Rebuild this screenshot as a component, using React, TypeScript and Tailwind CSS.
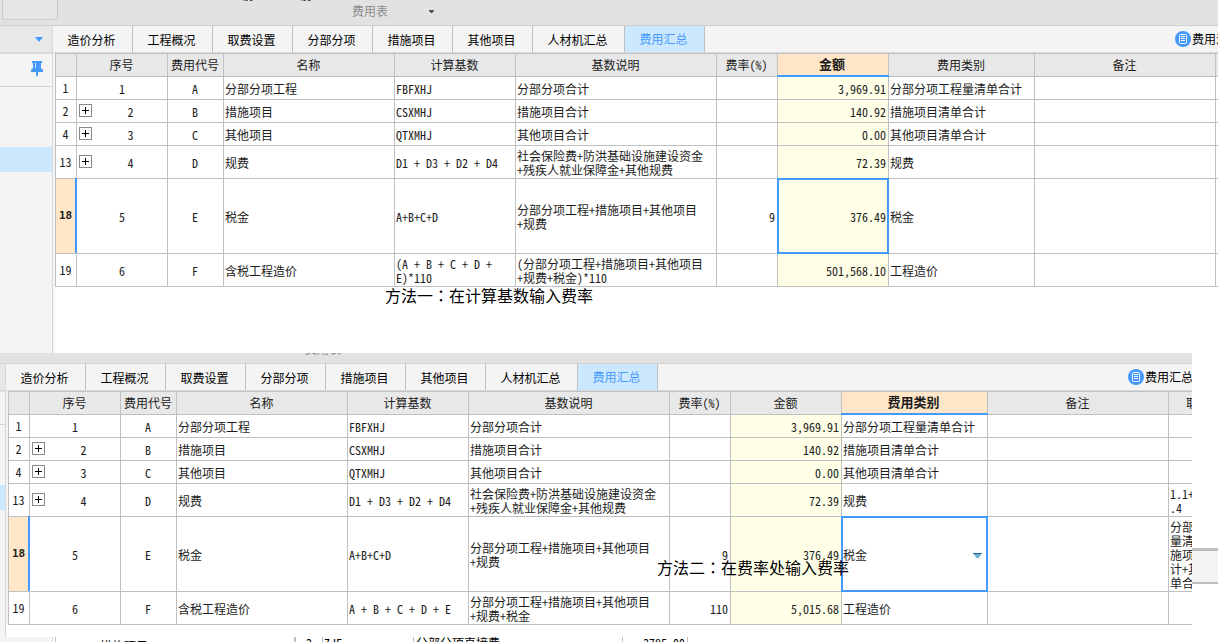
import { Fragment, type ReactNode } from "react";

type Row = {
  line: number;
  no: string;
  expandable?: boolean;
  code: string;
  name: string;
  base: string[];
  desc: string[];
  rate?: string;
  amount: string;
  kind: string;
  extra?: string[];
  height: string;
};

const TABS = ["造价分析", "工程概况", "取费设置", "分部分项", "措施项目", "其他项目", "人材机汇总", "费用汇总"];

const COLUMNS = ["", "序号", "费用代号", "名称", "计算基数", "基数说明", "费率(%)", "金额", "费用类别", "备注"];

const COMMON: Row[] = [
  { line: 1, no: "1", code: "A", name: "分部分项工程", base: ["FBFXHJ"], desc: ["分部分项合计"], amount: "3,969.91", kind: "分部分项工程量清单合计", height: "h-[23px]" },
  { line: 2, no: "2", expandable: true, code: "B", name: "措施项目", base: ["CSXMHJ"], desc: ["措施项目合计"], amount: "140.92", kind: "措施项目清单合计", height: "h-[23px]" },
  { line: 4, no: "3", expandable: true, code: "C", name: "其他项目", base: ["QTXMHJ"], desc: ["其他项目合计"], amount: "0.00", kind: "其他项目清单合计", height: "h-[23px]" },
  { line: 13, no: "4", expandable: true, code: "D", name: "规费", base: ["D1 + D3 + D2 + D4"], desc: ["社会保险费+防洪基础设施建设资金", "+残疾人就业保障金+其他规费"], amount: "72.39", kind: "规费", extra: ["1.1+", ".4"], height: "h-[33px]" },
  { line: 18, no: "5", code: "E", name: "税金", base: ["A+B+C+D"], desc: ["分部分项工程+措施项目+其他项目", "+规费"], rate: "9", amount: "376.49", kind: "税金", extra: ["分部分项", "量清单合", "施项目合", "计+其他", "单合计"], height: "h-[75px]" },
];

const METHOD_ONE: Row[] = [
  ...COMMON.map((row) => ({ ...row, extra: undefined })),
  { line: 19, no: "6", code: "F", name: "含税工程造价", base: ["(A + B + C + D +", "E)*110"], desc: ["(分部分项工程+措施项目+其他项目", "+规费+税金)*110"], amount: "501,568.10", kind: "工程造价", height: "h-[33px]" },
];

const METHOD_TWO: Row[] = [
  ...COMMON,
  { line: 19, no: "6", code: "F", name: "含税工程造价", base: ["A + B + C + D + E"], desc: ["分部分项工程+措施项目+其他项目", "+规费+税金"], rate: "110", amount: "5,015.68", kind: "工程造价", height: "h-[33px]" },
];

const BORDER = "border-r border-b border-[#c0c0c0] last:border-r-0";
const CELL = `${BORDER} overflow-hidden p-0 pr-[2px] pl-px leading-[14px] font-normal whitespace-nowrap`;

function Lines({ items }: { items: string[] }) {
  return (
    <>
      {items.map((item, i) => (
        <Fragment key={i}>
          {i > 0 && <br />}
          {item}
        </Fragment>
      ))}
    </>
  );
}

function Tabs({ end }: { end: ReactNode }) {
  return (
    <div className="flex h-[27px] border-b border-[#dadada] bg-[#f4f4f4] font-['Noto_Sans_CJK_SC',sans-serif]">
      <div role="tablist" className="flex">
        {TABS.map((tab, i) => {
          const active = i === TABS.length - 1;
          return (
            <button
              key={tab}
              role="tab"
              aria-selected={active}
              className={
                "h-[26px] border-r border-[#c0c0c0] pr-[16px] pl-[14px] text-center text-[12px] whitespace-nowrap " +
                (i === 6 ? "w-[92px] " : "w-[80px] ") +
                (active ? "bg-[#cce8ff] leading-[26px] text-[#4499ff]" : "leading-[28px] text-black")
              }
            >
              {tab}
            </button>
          );
        })}
      </div>
      {end}
    </div>
  );
}

function SummaryButton() {
  return (
    <button className="flex h-[26px] items-center gap-px text-[12px] whitespace-nowrap text-black">
      <svg viewBox="0 0 16 16" className="size-4 shrink-0" aria-hidden="true">
        <circle cx="8" cy="8" r="8" fill="#4499ff" />
        <rect x="4.5" y="3.5" width="7" height="9" rx="1" fill="none" stroke="#fff" />
        <path d="M6 5.500h4M6 7.500h4M6 9.500h4" stroke="#fff" strokeWidth="1" />
      </svg>
      <span className="leading-[28px]">费用汇总</span>
    </button>
  );
}

function CostTable({ rows, active, extraTitle }: { rows: Row[]; active: "金额" | "费用类别"; extraTitle: string }) {
  const frame = <span className="pointer-events-none absolute -inset-px border-2 border-[#4499ff]" />;
  return (
    <table className="w-full table-fixed border-separate border-spacing-0 border-t border-l border-[#c0c0c0] bg-white text-[12px] text-[#1c1c1c]">
      <colgroup>
        <col className="w-[21px]" />
        <col className="w-[91px]" />
        <col className="w-[56px]" />
        <col className="w-[171px]" />
        <col className="w-[121px]" />
        <col className="w-[201px]" />
        <col className="w-[61px]" />
        <col className="w-[111px]" />
        <col className="w-[146px]" />
        <col className="w-[181px]" />
        <col />
      </colgroup>
      <thead>
        <tr className="h-[23px]">
          {COLUMNS.map((title) =>
            title === active ? (
              <th key={title} className={`${BORDER} relative bg-[#ffe6c8] p-0 pr-[2px] pb-[2px] text-[13px] leading-[14px] font-bold`}>
                {title}
                <span className="absolute -right-px -bottom-px -left-px h-[2px] bg-[#4499ff]" />
              </th>
            ) : (
              <th key={title} className={`${CELL} bg-[#e8e8e8] text-center`}>
                {title}
              </th>
            ),
          )}
          <th className={`${BORDER} overflow-hidden bg-[#e8e8e8] p-0 pl-[17px] text-left leading-[14px] font-normal whitespace-nowrap`}>{extraTitle}</th>
        </tr>
      </thead>
      <tbody>
        {rows.map((row) => {
          const current = row.line === 18;
          return (
            <tr key={row.line} className={row.height}>
              {current ? (
                <th className={`${BORDER} relative bg-[#ffe6c8] p-0 pr-px font-['DejaVu_Sans_Mono',monospace] text-[11px] leading-[14px] font-bold`}>
                  {row.line}
                  <span className="absolute -top-px -right-px bottom-0 w-[2px] bg-[#4499ff]" />
                </th>
              ) : (
                <th className={`${CELL} text-center`}>{row.line}</th>
              )}
              <td className={`${CELL} pb-px`}>
                <div className="flex items-center pl-px">
                  {row.expandable && (
                    <button aria-label="展开" className="flex size-[13px] items-center justify-center border border-[#8a8a8a] bg-white">
                      <svg viewBox="0 0 7 7" className="size-[7px]" aria-hidden="true">
                        <path d="M0 3.5h7M3.5 0v7" stroke="#000" />
                      </svg>
                    </button>
                  )}
                  <span className={row.expandable ? "grow pt-[3px] pl-[4px] text-center" : "grow pt-[3px] text-center"}>{row.no}</span>
                </div>
              </td>
              <td className={`${CELL} pt-[2px] text-center`}>{row.code}</td>
              <td className={`${CELL} pt-[2px]`}>{row.name}</td>
              <td className={`${CELL} pt-[2px]`}>
                <Lines items={row.base} />
              </td>
              <td className={`${CELL} pt-[2px]`}>
                <Lines items={row.desc} />
              </td>
              <td className={`${CELL} pt-[2px] text-right`}>{row.rate}</td>
              {current && active === "金额" ? (
                <td className={`${BORDER} relative bg-[#ffffe8] p-0 pt-[2px] pr-[2px] text-right leading-[14px]`}>
                  {row.amount}
                  {frame}
                </td>
              ) : (
                <td className={`${CELL} bg-[#ffffe8] pt-[2px] text-right`}>{row.amount}</td>
              )}
              {current && active === "费用类别" ? (
                <td className={`${BORDER} relative p-0 pt-[2px] pr-[2px] pl-px leading-[14px]`}>
                  <div className="flex items-center">
                    <select aria-label="费用类别" defaultValue={row.kind} className="h-[14px] grow appearance-none bg-transparent p-0 leading-[14px] outline-none">
                      <option>{row.kind}</option>
                    </select>
                    <svg viewBox="0 0 9 5" className="mr-[3px] h-[5px] w-[9px]" aria-hidden="true">
                      <path d="M0 0h9L5.500 5h-2z" fill="#6baed6" />
                      <path d="M0 0h9v1H0z" fill="#2b6a9b" />
                    </svg>
                  </div>
                  {frame}
                </td>
              ) : (
                <td className={`${CELL} pt-[2px]`}>{row.kind}</td>
              )}
              <td className={CELL} />
              <td className={`${CELL} pt-px`}>{row.extra && <Lines items={row.extra} />}</td>
            </tr>
          );
        })}
      </tbody>
    </table>
  );
}

function Caption({ method, text }: { method: string; text: string }) {
  return (
    <>
      {method}
      <span className="font-['Noto_Sans_CJK_TC',sans-serif]">：</span>
      {text}
    </>
  );
}

export default function App() {
  return (
    <main className="flex h-screen flex-col overflow-hidden bg-white font-['Noto_Sans_Mono_CJK_SC','Noto_Sans_CJK_SC',monospace] text-[12px]">
      <section className="flex h-[353px] shrink-0 flex-col overflow-hidden">
        <header className="flex h-[26px] shrink-0 items-start overflow-hidden border-b border-[#d0d0d0] bg-[#e2e2e2]">
          <div className="ml-[2px] h-[20px] w-[56px] rounded-b-[3px] border border-t-0 border-[#cccccc] bg-[#e6e6e6]" />
          <div className="ml-[184px] flex h-[2px] w-[110px] items-end gap-[46px] overflow-hidden leading-[14px] text-black">
            <span>前</span>
            <span>前</span>
          </div>
          <button className="flex items-center gap-[41px] leading-[22px] text-[#8c8c8c]">
            费用表
            <svg viewBox="0 0 5 3" className="h-[3px] w-[5px]" aria-hidden="true">
              <path d="M0 0h5v1L3 3H2L0 1z" fill="#505050" />
            </svg>
          </button>
        </header>
        <div className="flex min-h-0 grow">
          <aside className="w-[53px] shrink-0 border-r border-[#d8d8d8] bg-[#f4f4f4]">
            <div className="flex h-[28px] items-center justify-end border-b-2 border-[#dadada] bg-[#e8e8e8] pr-[9px]">
              <svg viewBox="0 0 8 5" className="h-[5px] w-[8px]" aria-hidden="true">
                <path d="M0 0h8L4 5z" fill="#4499ff" />
              </svg>
            </div>
            <div className="flex h-[33px] items-start justify-end border-b border-[#d4d4d4] pt-[7px] pr-[9px]">
              <svg viewBox="0 0 12 16" className="h-[16px] w-[12px]" aria-hidden="true">
                <path d="M1 0h10v2H10v5l2 2v2H7v3l-1 2-1-2v-3H0V9l2-2V2H1z" fill="#4499ff" />
                <path d="M4.500 2v5" stroke="#cce8ff" />
              </svg>
            </div>
            <div className="mt-[60px] h-[25px] bg-[#cce8ff]" />
          </aside>
          <div className="min-w-0 grow overflow-hidden">
            <Tabs
              end={
                <div className="ml-auto w-[43px] overflow-hidden">
                  <SummaryButton />
                </div>
              }
            />
            <div className="flex h-full border-l-2 border-[#f4f4f4]">
              <div className="min-w-0 grow">
                <CostTable rows={METHOD_ONE} active="金额" extraTitle="" />
                <p className="ml-[330px] font-['Noto_Sans_CJK_SC',sans-serif] text-[16px] leading-[16px] text-black">
                  <Caption method="方法一" text="在计算基数输入费率" />
                </p>
              </div>
            </div>
          </div>
        </div>
      </section>

      <div className="flex h-[284px] shrink-0 items-start">
        <section className="relative flex h-full min-w-0 grow flex-col overflow-hidden">
          <div className="h-[11px] shrink-0 overflow-hidden border-b border-[#d0d0d0] bg-[#e2e2e2]">
            <div className="ml-[305px] flex h-[3px] items-end leading-[14px] text-[#8c8c8c]">费用表</div>
          </div>
          <div className="flex min-h-0 grow">
            <aside className="w-[6px] shrink-0 border-r border-[#d8d8d8] bg-[#f4f4f4]">
              <div className="h-[28px] border-b-2 border-[#dadada] bg-[#e8e8e8]" />
              <div className="h-[33px] border-b border-[#d4d4d4]" />
              <div className="mt-[60px] h-[25px] bg-[#cce8ff]" />
            </aside>
            <div className="min-w-0 grow overflow-hidden">
              <Tabs
                end={
                  <div className="ml-auto w-[64px] overflow-hidden">
                    <SummaryButton />
                  </div>
                }
              />
              <div className="border-l-2 border-[#f4f4f4]">
                <CostTable rows={METHOD_TWO} active="费用类别" extraTitle="取费" />
              </div>
            </div>
          </div>
          <p className="absolute top-[206px] left-[657px] font-['Noto_Sans_CJK_SC',sans-serif] text-[16px] leading-[16px] text-black">
            <Caption method="方法二" text="在费率处输入费率" />
          </p>
        </section>
        <div className="mt-[195px] h-[36px] w-[26px] shrink-0 border-t-[3px] border-b-2 border-[#bdbdbd] bg-[#f4f4f4]" />
      </div>

      <footer className="flex h-[5px] shrink-0 overflow-hidden leading-[12px] text-black">
        <div className="w-[53px] border-r border-[#d8d8d8] bg-[#f4f4f4]" />
        <div className="w-[3px] border-r border-[#c0c0c0]" />
        <div className="w-[240px] border-r-2 border-[#c0c0c0] pt-[3px] pl-[44px]">措施项目</div>
        <div className="w-[27px] border-r border-[#c0c0c0] text-center">2</div>
        <div className="w-[91px] border-r border-[#c0c0c0] pl-px">ZJF</div>
        <div className="w-[209px] border-r border-[#c0c0c0] pl-[2px]">分部分项直接费</div>
        <div className="w-[65px] border-r border-[#c0c0c0] pr-[2px] text-right">3785.00</div>
      </footer>
    </main>
  );
}
